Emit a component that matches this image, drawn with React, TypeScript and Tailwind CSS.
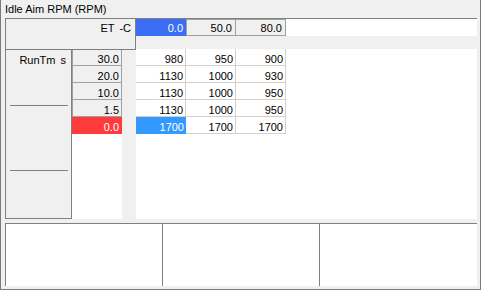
import React from "react";

type Row = { label: string; values: string[]; active?: boolean };

const columns = ["0.0", "50.0", "80.0"];

const rows: Row[] = [
  { label: "30.0", values: ["980", "950", "900"] },
  { label: "20.0", values: ["1130", "1000", "930"] },
  { label: "10.0", values: ["1130", "1000", "950"] },
  { label: "1.5", values: ["1130", "1000", "950"] },
  { label: "0.0", values: ["1700", "1700", "1700"], active: true },
];

export default function App() {
  return (
    <div className="w-[481px] h-[290px] bg-[#f0f0f0] border-x border-b border-[#7a7a7a] flex flex-col text-[11px] leading-[13px] text-black font-['Liberation_Sans',Arial,sans-serif]">
      <div className="h-[18px] pl-[4px] pt-[3px]">Idle Aim RPM (RPM)</div>

      {/* table panel */}
      <div className="ml-[4px] w-[472px] h-[201px] border-l border-t border-[#808080] flex">
        <div className="w-[130px] flex flex-col">
          <div className="h-[31px] border-r border-b border-[#808080] flex justify-end pr-[4px] pt-[3px] [word-spacing:2px]">
            ET -C
          </div>
          <div className="flex flex-1">
            <div className="w-[66px] border-r border-b border-[#808080] flex flex-col">
              <div className="h-[55px] pt-[4px] pr-[5px] text-right [word-spacing:2px]">RunTm s</div>
              <div className="ml-[4px] w-[58px] h-px bg-[#808080]" />
              <div className="h-[64px]" />
              <div className="ml-[4px] w-[58px] h-px bg-[#808080]" />
            </div>
            <div className="w-[50px] bg-white flex flex-col">
              {rows.map((r, i) => (
                <div
                  key={i}
                  className={
                    r.active
                      ? "h-[17px] bg-[#ff3b3b] text-white text-right pr-[3px] pt-[4px]"
                      : i === 0
                        ? "h-[16px] bg-[#f0f0f0] border-x border-b border-[#a0a0a0] text-right pr-[2px] pt-[3px]"
                        : "h-[17px] bg-[#f0f0f0] border-x border-b border-[#a0a0a0] text-right pr-[2px] pt-[4px]"
                  }
                >
                  {r.label}
                </div>
              ))}
            </div>
            <div className="w-[14px]" />
          </div>
        </div>

        <div className="flex-1 flex flex-col">
          <div className="h-[17px] flex bg-white">
            <div className="w-[50px] bg-[#3b6ef5] text-white text-right pr-[3px] pt-[3px]">{columns[0]}</div>
            <div className="w-[50px] bg-[#f0f0f0] border border-[#a0a0a0] text-right pr-[3px] pt-[2px]">{columns[1]}</div>
            <div className="w-[50px] bg-[#f0f0f0] border-y border-r border-[#a0a0a0] text-right pr-[3px] pt-[2px]">{columns[2]}</div>
          </div>
          <div className="h-[13px]" />
          <div className="flex-1 bg-white">
            {rows.map((r, i) => (
              <div key={i} className="flex h-[17px]">
                {r.values.map((v, j) => (
                  <div
                    key={j}
                    className={
                      r.active && j === 0
                        ? "w-[50px] bg-[#3399ff] text-white text-right pr-[2px] pt-[4px]"
                        : "w-[50px] border-r border-b border-[#d4d0c8] text-right pr-[2px] pt-[4px]"
                    }
                  >
                    {v}
                  </div>
                ))}
              </div>
            ))}
          </div>
        </div>
      </div>

      {/* status panes */}
      <div className="mt-[4px] ml-[4px] w-[472px] h-[63px] border-l border-t border-[#808080] flex bg-white">
        <div className="w-[156px]" />
        <div className="w-[157px] border-l border-[#808080]" />
        <div className="flex-1 border-l border-[#808080]" />
      </div>
    </div>
  );
}
